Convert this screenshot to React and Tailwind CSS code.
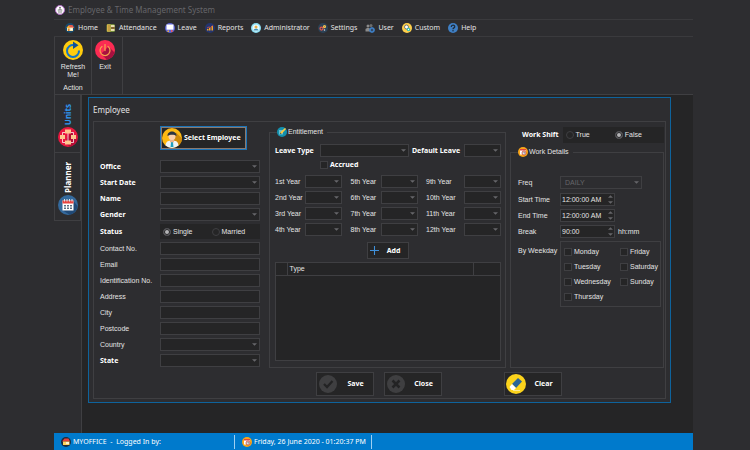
import { useState } from "react";

const HomeIcon = ({ className }) => (
  <svg viewBox="0 0 20 20" className={className}>
    <circle cx="10" cy="10" r="10" fill="#17496b" />
    <path d="M3 10 8 4h7l3 5v1H3z" fill="#e2574c" />
    <path d="M4 9h12v7H4z" fill="#f6e3b0" />
    <path d="M3 10 7 5l4 5z" fill="#f5b52e" />
    <path d="M6 11h3v5H6z" fill="#d9822b" />
    <path d="M11 11h4v3h-4z" fill="#fff" />
  </svg>
);

const OfficeIcon = ({ className }) => (
  <svg viewBox="0 0 20 20" className={className}>
    <circle cx="10" cy="10" r="10" fill="#1b2c3c" />
    <path d="M2 9 7 3h8l3 6z" fill="#e8403a" />
    <path d="M4 9h13v7H4z" fill="#ffd35c" />
    <path d="M10 10h6v4h-6z" fill="#fff4cf" />
  </svg>
);

const AttendanceIcon = ({ className }) => (
  <svg viewBox="0 0 20 20" className={className}>
    <rect x="1" y="2" width="17" height="16" rx="3" fill="#6f8a3a" />
    <path d="M2 3h7v14H2z" fill="#f0c552" />
    <path d="M10 4h7v4h-7zM10 12h7v4h-7z" fill="#e9dfae" />
    <path d="M3 6h5M3 10h5M3 14h5" stroke="#7a5a28" strokeWidth="1.5" />
    <path d="M11 10h6" stroke="#a33b2c" strokeWidth="2" />
  </svg>
);

const LeaveIcon = ({ className }) => (
  <svg viewBox="0 0 20 20" className={className}>
    <circle cx="10" cy="10" r="10" fill="#5b62d6" />
    <path d="M3 3h14v9H3z" fill="#fff" />
    <path d="M3 12h14v2H3z" fill="#c9cdf5" />
    <path d="M5 15h3v3H5z" fill="#f2b134" />
    <path d="M12 14h3v4h-3z" fill="#e85d5d" />
  </svg>
);

const ReportsIcon = ({ className }) => (
  <svg viewBox="0 0 20 20" className={className}>
    <circle cx="10" cy="10" r="10" fill="#24356e" />
    <path d="M4 12h3v3H4zM8 10h3v5H8zM13 6h3v9h-3z" fill="#f5a623" />
    <path d="m4 10 4-2 3 1 5-4" stroke="#e2574c" strokeWidth="1.5" fill="none" />
  </svg>
);

const AdminIcon = ({ className }) => (
  <svg viewBox="0 0 20 20" className={className}>
    <circle cx="10" cy="10" r="10" fill="#8be0f4" />
    <circle cx="10" cy="10" r="7" fill="#eafaff" />
    <circle cx="10" cy="8" r="3" fill="#e8b04a" />
    <path d="M5 15c0-5 10-5 10 0z" fill="#3a8fb5" />
  </svg>
);

const SettingsIcon = ({ className }) => (
  <svg viewBox="0 0 20 20" className={className}>
    <circle cx="10" cy="10" r="10" fill="#2c4257" />
    <circle cx="7" cy="11" r="3" fill="none" stroke="#e2574c" strokeWidth="2.5" />
    <circle cx="13" cy="7" r="2" fill="none" stroke="#f5c04e" strokeWidth="2.5" />
    <circle cx="13" cy="14" r="1.5" fill="#dfe6ea" />
  </svg>
);

const UserIcon = ({ className }) => (
  <svg viewBox="0 0 20 20" className={className}>
    <circle cx="6" cy="6" r="3" fill="#8a8a8a" />
    <circle cx="12" cy="5" r="3" fill="#6d6d6d" />
    <path d="M1 17V13c0-4 10-4 10 0v4z" fill="#8a8a8a" />
    <circle cx="14" cy="14" r="4" fill="none" stroke="#3f7fc4" strokeWidth="3" />
    <path d="M14 8v12M8 14h12" stroke="#3f7fc4" strokeWidth="1.5" />
    <circle cx="14" cy="14" r="1.5" fill="#2d2d30" />
  </svg>
);

const CustomIcon = ({ className }) => (
  <svg viewBox="0 0 20 20" className={className}>
    <circle cx="10" cy="10" r="10" fill="#ffcf4a" />
    <circle cx="9" cy="8" r="4" fill="#fff" stroke="#4b5a66" strokeWidth="1.5" />
    <circle cx="13" cy="13" r="3.5" fill="#2fc0b4" />
    <circle cx="13" cy="13" r="1.3" fill="#fff" />
  </svg>
);

const HelpIcon = ({ className }) => (
  <svg viewBox="0 0 20 20" className={className}>
    <circle cx="10" cy="10" r="10" fill="#3f7fc4" />
    <path
      d="M6.5 8c0-5 7-5 7-.5 0 2.500-3.500 2-3.500 5"
      fill="none"
      stroke="#1d2b3a"
      strokeWidth="2.5"
    />
    <circle cx="10" cy="15.500" r="1.5" fill="#1d2b3a" />
  </svg>
);

const AppIcon = ({ className }) => (
  <svg viewBox="0 0 20 20" className={className}>
    <circle cx="10" cy="10" r="9" fill="#fff" stroke="#b06ac4" strokeWidth="2" />
    <circle cx="10" cy="5" r="1.500" fill="#444" />
    <path d="M8 17V8h4v9" fill="none" stroke="#555" strokeWidth="1.5" />
    <path d="M6 9v4M14 9v4" stroke="#999" strokeWidth="1" />
  </svg>
);

const RefreshIcon = ({ className }) => (
  <svg viewBox="0 0 40 40" className={className}>
    <circle cx="20" cy="20" r="20" fill="#ffcc0d" />
    <path
      d="M32 21A12 12 0 1 1 22 10"
      fill="none"
      stroke="#1273c4"
      strokeWidth="4"
    />
    <path d="M20 3 31 10.500 20 18z" fill="#0f4f96" />
  </svg>
);

const ExitIcon = ({ className }) => (
  <svg viewBox="0 0 40 40" className={className}>
    <circle cx="20" cy="20" r="20" fill="#fb2b53" />
    <path d="M27 13 39 25a20 20 0 0 1-15 14.500L12 28z" fill="#a8103f" />
    <path
      d="M14 13a10 10 0 1 0 12 0"
      fill="none"
      stroke="#f6a04d"
      strokeWidth="2.500"
      strokeLinecap="round"
    />
    <path d="M20 9v12" stroke="#f6a04d" strokeWidth="2.500" strokeLinecap="round" />
  </svg>
);

const UnitsIcon = ({ className }) => (
  <svg viewBox="0 0 40 40" className={className}>
    <circle cx="20" cy="20" r="20" fill="#e8173f" />
    <path d="M26 8 38 26a20 20 0 0 1-14 13.500L14 32z" fill="#b80d35" />
    <path d="M9 18v-7h22v7M20 12v18M9 24v7h22v-7" fill="none" stroke="#fff" strokeWidth="1.5" />
    <path d="M14 5h12v8H14zM4 16h10v8H4zM26 16h10v8H26zM14 27h12v8H14z" fill="#ffc78f" />
  </svg>
);

const PlannerIcon = ({ className }) => (
  <svg viewBox="0 0 40 40" className={className}>
    <circle cx="20" cy="20" r="20" fill="#34699c" />
    <path d="M31 12 39 22a20 20 0 0 1-16 17.500L10 31z" fill="#204a78" />
    <path d="M9 11h22v20H9z" fill="#fff" />
    <path d="M9 11h22v6H9z" fill="#e8443f" />
    <path d="M13 8v5M18 8v5M23 8v5M28 8v5" stroke="#dfe6ea" strokeWidth="2" />
    <path
      d="M12 20h4v3h-4zM18 20h4v3h-4zM24 20h4v3h-4zM12 25h4v3h-4zM18 25h4v3h-4zM24 25h4v3h-4z"
      fill="#5c6f82"
    />
  </svg>
);

const PersonIcon = ({ className }) => (
  <svg viewBox="0 0 40 40" className={className}>
    <circle cx="20" cy="20" r="20" fill="#fdb913" />
    <path d="M28 9 40 21a20 20 0 0 1-9 15.500L20 24z" fill="#d08a0a" />
    <path d="M7 35c1-9 6-10 13-10s12 1 13 10a20 20 0 0 1-26 0z" fill="#eef4f7" />
    <path d="M16 22h8v6l-4 3-4-3z" fill="#e9b58e" />
    <path d="m18 29 2-1 2 1 1 9h-6z" fill="#1d9fc0" />
    <circle cx="20" cy="17" r="7" fill="#fad0ac" />
    <path d="M11 16C10 4 30 4 29 16c-4-3-12-4-18 0z" fill="#2b3440" />
  </svg>
);

const PencilIcon = ({ className }) => (
  <svg viewBox="0 0 20 20" className={className}>
    <circle cx="10" cy="10" r="10" fill="#1490ad" />
    <path d="M4 6h8v9H4z" fill="#6cc0d2" />
    <path d="m6 14 1-4 9-8 2 2-8 9z" fill="#ffc93c" />
    <path d="m6 14 1-3 2 2z" fill="#333" />
  </svg>
);

const ClockIcon = ({ className }) => (
  <svg viewBox="0 0 20 20" className={className}>
    <circle cx="10" cy="10" r="10" fill="#f9a51a" />
    <path d="M4 4h12v11H4z" fill="#fff" />
    <path d="M4 4h12v3H4z" fill="#e2453c" />
    <circle cx="12" cy="12" r="4" fill="#dfe6ea" stroke="#c0392b" strokeWidth="1.5" />
    <path d="M12 10v2h2" stroke="#444" strokeWidth="1" fill="none" />
  </svg>
);

const CheckCircleIcon = ({ className }) => (
  <svg viewBox="0 0 36 36" className={className}>
    <circle cx="18" cy="18" r="18" fill="#3f3f41" />
    <path d="m10 18 6 6 11-12" fill="none" stroke="#232324" strokeWidth="4.500" />
  </svg>
);

const CrossCircleIcon = ({ className }) => (
  <svg viewBox="0 0 36 36" className={className}>
    <circle cx="18" cy="18" r="18" fill="#3f3f41" />
    <path d="m11 11 14 14M25 11 11 25" stroke="#232324" strokeWidth="5" />
  </svg>
);

const EraserIcon = ({ className }) => (
  <svg viewBox="0 0 40 40" className={className}>
    <circle cx="20" cy="20" r="20" fill="#fbd31c" />
    <path d="M24 8 32 15 20 28 12 20z" fill="#2a6496" />
    <path d="m12 20 8 8-4 4h-5l-4-6z" fill="#fff" />
    <path d="M14 33h14" stroke="#fff3b8" strokeWidth="1.500" />
  </svg>
);

const menuItems = [
  { label: "Home", icon: HomeIcon },
  { label: "Attendance", icon: AttendanceIcon },
  { label: "Leave", icon: LeaveIcon },
  { label: "Reports", icon: ReportsIcon },
  { label: "Administrator", icon: AdminIcon },
  { label: "Settings", icon: SettingsIcon },
  { label: "User", icon: UserIcon },
  { label: "Custom", icon: CustomIcon },
  { label: "Help", icon: HelpIcon },
];

const personFields = [
  { label: "Office", name: "office", type: "select", bold: true },
  { label: "Start Date", name: "startDate", type: "select", bold: true },
  { label: "Name", name: "name", bold: true },
  { label: "Gender", name: "gender", type: "select", bold: true },
  { label: "Status", name: "status", type: "radio", bold: true },
  { label: "Contact No.", name: "contact" },
  { label: "Email", name: "email" },
  { label: "Identification No.", name: "identification" },
  { label: "Address", name: "address" },
  { label: "City", name: "city" },
  { label: "Postcode", name: "postcode" },
  { label: "Country", name: "country", type: "select" },
  { label: "State", name: "state", type: "select", bold: true },
];

const yearColumns = [
  ["1st Year", "2nd Year", "3rd Year", "4th Year"],
  ["5th Year", "6th Year", "7th Year", "8th Year"],
  ["9th Year", "10th Year", "11th Year", "12th Year"],
];

const weekdays = [
  ["Monday", "Tuesday", "Wednesday", "Thursday"],
  ["Friday", "Saturday", "Sunday"],
];

const boldText = "font-['Noto_Sans',sans-serif] font-bold text-white";
const fieldBox = "h-[13px] w-full border border-[#3f3f42] px-1";

const Select = ({ id, value = "", disabled }) => (
  <div className="relative w-full">
    <select
      id={id}
      disabled={disabled}
      defaultValue={value}
      className={`${fieldBox} block appearance-none leading-[11px] ${
        disabled ? "bg-[#2d2d30] text-[#66666a] opacity-100" : "bg-[#252526]"
      }`}
    >
      <option value={value}>{value}</option>
    </select>
    <svg
      viewBox="0 0 4 2"
      className="pointer-events-none absolute top-[5px] right-[3px] h-[3px] w-[5px]"
    >
      <path d="M0 0h4L2 2z" fill="#66666a" />
    </svg>
  </div>
);

const Spinner = ({ id, value }) => (
  <div className="flex h-[13px] w-[55px] border border-[#3f3f42] bg-[#252526]">
    <input id={id} defaultValue={value} className="w-0 flex-1 pl-px leading-[11px] outline-none" />
    <div className="flex w-2 flex-col items-center justify-between py-px">
      <button type="button" aria-label="Increase">
        <svg viewBox="0 0 4 2" className="block h-[3px] w-[5px]">
          <path d="M0 2h4L2 0z" fill="#66666a" />
        </svg>
      </button>
      <button type="button" aria-label="Decrease">
        <svg viewBox="0 0 4 2" className="block h-[3px] w-[5px]">
          <path d="M0 0h4L2 2z" fill="#66666a" />
        </svg>
      </button>
    </div>
  </div>
);

const RadioPair = ({ name, options, value, onChange, className }) => (
  <div className={`grid grid-cols-2 items-center bg-[#252526] pl-[3px] ${className}`}>
    {options.map((option) => (
      <label key={option} className="flex items-center gap-[2px]">
        <input
          type="radio"
          name={name}
          checked={value === option}
          onChange={() => onChange(option)}
          className="size-2 appearance-none rounded-full border border-[#3f3f42] bg-[#252526] checked:border-[#4a4a4e] checked:bg-[#b4b4b6] checked:shadow-[inset_0_0_0_1px_#252526]"
        />
        {option}
      </label>
    ))}
  </div>
);

const Checkbox = ({ label, className = "" }) => (
  <label className={`flex items-center gap-[2px] ${className}`}>
    <input
      type="checkbox"
      className="size-2 appearance-none border border-[#3f3f42] bg-[#252526] checked:bg-[#007acc]"
    />
    {label}
  </label>
);

const ActionButton = ({ icon: Icon, label, iconClass }) => (
  <button
    type="button"
    className={`flex h-6 w-[58px] items-center border border-[#3f3f42] bg-[#252526] pl-px ${boldText}`}
  >
    <span className="flex w-5 justify-center">
      <Icon className={iconClass} />
    </span>
    <span className="flex-1 text-center">{label}</span>
  </button>
);

const PersonForm = () => {
  const [status, setStatus] = useState("Single");

  return (
    <div className="w-[175px] shrink-0 pt-1 pr-[9px] pb-[31px] pl-[6px]">
      <div className="mb-[10px] pl-[60px]">
        <button
          type="button"
          className={`flex h-6 w-[87px] items-center gap-[2px] border border-[#1b74b8] bg-[#252526] whitespace-nowrap outline outline-offset-[-2px] outline-[#8a7a70] ${boldText}`}
        >
          <PersonIcon className="ml-px size-5 shrink-0" />
          Select Employee
        </button>
      </div>
      <div className="flex flex-col gap-[3px]">
        {personFields.map((field) => (
          <div key={field.name} className="flex items-center">
            {field.type === "radio" ? (
              <>
                <span className={`w-[60px] shrink-0 ${boldText}`}>{field.label}</span>
                <RadioPair
                  name={field.name}
                  options={["Single", "Married"]}
                  value={status}
                  onChange={setStatus}
                  className="h-[15px] flex-1"
                />
              </>
            ) : (
              <>
                <label
                  htmlFor={field.name}
                  className={`w-[60px] shrink-0 whitespace-nowrap ${field.bold ? boldText : ""}`}
                >
                  {field.label}
                </label>
                {field.type === "select" ? (
                  <Select id={field.name} />
                ) : (
                  <input id={field.name} className={`${fieldBox} bg-[#252526]`} />
                )}
              </>
            )}
          </div>
        ))}
      </div>
    </div>
  );
};

const Entitlement = () => (
  <fieldset className="flex min-w-0 flex-1 flex-col border border-[#3f3f42] pr-1 pb-[6px] pl-[5px]">
    <legend className="ml-[2px] flex h-[10px] items-center gap-px pr-1">
      <PencilIcon className="size-[10px]" />
      Entitlement
    </legend>
    <div className="mt-[7px] flex items-center">
      <label htmlFor="leaveType" className={`w-[45px] shrink-0 whitespace-nowrap ${boldText}`}>
        Leave Type
      </label>
      <Select id="leaveType" />
      <label
        htmlFor="defaultLeave"
        className={`w-[55px] shrink-0 pl-[3px] whitespace-nowrap ${boldText}`}
      >
        Default Leave
      </label>
      <div className="w-[37px] shrink-0">
        <Select id="defaultLeave" />
      </div>
    </div>
    <Checkbox label="Accrued" className={`mt-[2px] ml-[45px] h-3 ${boldText}`} />
    <div className="mt-1 flex justify-between">
      {yearColumns.map((column) => (
        <div key={column[0]} className="flex flex-col gap-[3px]">
          {column.map((year) => (
            <div key={year} className="flex items-center">
              <label
                htmlFor={year}
                className={`whitespace-nowrap ${
                  column[0] === "9th Year" ? "w-[38px]" : "w-[30px]"
                }`}
              >
                {year}
              </label>
              <div className="w-[37px]">
                <Select id={year} />
              </div>
            </div>
          ))}
        </div>
      ))}
    </div>
    <button
      type="button"
      className={`mt-[6px] flex h-[17px] w-[42px] items-center self-center border border-[#3f3f42] bg-[#252526] ${boldText}`}
    >
      <svg viewBox="0 0 10 10" className="ml-[2px] size-[9px]">
        <path d="M5 0v10M0 5h10" stroke="#3f8fd8" strokeWidth="1.200" />
      </svg>
      <span className="flex-1 text-center">Add</span>
    </button>
    <div className="mt-[3px] flex-1 border border-[#3f3f42] bg-[#252526]">
      <table className="w-full table-fixed border-collapse">
        <thead>
          <tr className="h-3 border-b border-[#3f3f42]">
            <th className="w-[11px] border-r border-[#3f3f42]"></th>
            <th className="border-r border-[#3f3f42] px-[2px] text-left font-normal">Type</th>
            <th className="w-[27px]"></th>
          </tr>
        </thead>
        <tbody></tbody>
      </table>
    </div>
  </fieldset>
);

const WorkDetails = () => {
  const [shift, setShift] = useState("False");

  return (
    <div className="flex w-[155px] shrink-0 flex-col">
      <div className="flex items-center gap-1 pr-px pl-3">
        <span className={`shrink-0 ${boldText}`}>Work Shift</span>
        <RadioPair
          name="shift"
          options={["True", "False"]}
          value={shift}
          onChange={setShift}
          className="h-4 flex-1"
        />
      </div>
      <fieldset className="mt-1 mr-px min-w-0 flex-1 border border-[#3f3f42] pr-[2px] pl-[7px]">
        <legend className="flex h-[10px] items-center gap-px pr-1">
          <ClockIcon className="size-[10px]" />
          Work Details
        </legend>
        <div className="mt-[19px] flex items-center">
          <label htmlFor="freq" className="w-[42px] shrink-0">
            Freq
          </label>
          <div className="w-[82px]">
            <Select id="freq" value="DAILY" disabled />
          </div>
        </div>
        <div className="mt-1 flex flex-col gap-[3px]">
          <div className="flex items-center">
            <label htmlFor="startTime" className="w-[42px] shrink-0">
              Start Time
            </label>
            <Spinner id="startTime" value="12:00:00 AM" />
          </div>
          <div className="flex items-center">
            <label htmlFor="endTime" className="w-[42px] shrink-0">
              End Time
            </label>
            <Spinner id="endTime" value="12:00:00 AM" />
          </div>
          <div className="flex items-center">
            <label htmlFor="break" className="w-[42px] shrink-0">
              Break
            </label>
            <Spinner id="break" value="90:00" />
            <span className="pl-[3px]">hh:mm</span>
          </div>
        </div>
        <div className="mt-[3px] flex">
          <span className="mt-[5px] w-[42px] shrink-0 whitespace-nowrap">By Weekday</span>
          <div className="grid min-w-0 flex-1 grid-cols-[56px_1fr] border border-[#3f3f42] pt-[5px] pb-1 pl-[3px]">
            {weekdays.map((column) => (
              <div key={column[0]} className="flex min-w-0 flex-col gap-[5px]">
                {column.map((day) => (
                  <Checkbox key={day} label={day} />
                ))}
              </div>
            ))}
          </div>
        </div>
      </fieldset>
    </div>
  );
};

const sideTab =
  "flex flex-col items-center gap-[2px] border border-t-0 border-[#3f3f42] pt-[9px] pb-[5px] font-['Noto_Sans',sans-serif] text-[8px] font-bold leading-[10px]";

const App = () => {
  return (
    <div className="min-h-screen bg-[#2d2d30] pr-[57px] pl-[54px] font-['Liberation_Sans',sans-serif] text-[7px] leading-[10px] text-[#e4e4e4]">
      <div className="flex min-h-screen flex-col">
        <header className="flex h-[19px] items-center gap-[3px] pl-px font-['Noto_Sans',sans-serif] text-[8px] text-[#66666a]">
          <AppIcon className="size-[10px]" />
          <h1>Employee &amp; Time Management System</h1>
        </header>

        <nav className="flex h-[18px] items-center gap-2 border-y border-[#3a3a3d] pl-[11px] font-['Noto_Sans',sans-serif]">
          {menuItems.map((item) => (
            <button key={item.label} type="button" className="flex items-center gap-[3px]">
              <item.icon className="size-[10px]" />
              {item.label}
            </button>
          ))}
        </nav>

        <div className="flex h-[58px] border-b border-l border-[#3f3f42] leading-2">
          <div className="flex w-[37px] flex-col items-center justify-between border-r border-[#3f3f42] pt-[3px] pb-[2px]">
            <button type="button" className="flex flex-col items-center gap-[3px]">
              <RefreshIcon className="size-5" />
              <span>
                Refresh
                <br />
                Me!
              </span>
            </button>
            <span>Action</span>
          </div>
          <div className="flex w-[31px] flex-col items-center border-r border-[#3f3f42] pt-[3px] pr-1">
            <button type="button" className="flex flex-col items-center gap-[3px]">
              <ExitIcon className="size-5" />
              Exit
            </button>
          </div>
        </div>

        <div className="flex flex-1">
          <aside className="flex w-7 shrink-0 flex-col border-r border-[#3f3f42]">
            <button type="button" className={`${sideTab} text-[#2f96f0]`}>
              <span className="rotate-180 [writing-mode:vertical-rl]">Units</span>
              <UnitsIcon className="size-5" />
            </button>
            <button type="button" className={`${sideTab} text-white`}>
              <span className="rotate-180 [writing-mode:vertical-rl]">Planner</span>
              <PlannerIcon className="size-5" />
            </button>
          </aside>

          <main className="flex-1 bg-[#252526] pt-[2px] pr-[22px] pl-[6px]">
            <section className="border border-[#0e639c] bg-[#2d2d30] px-1 pb-[3px]">
              <h2 className="flex h-[23px] items-center font-['Noto_Sans',sans-serif] text-[8px]">
                Employee
              </h2>
              <div className="flex border border-[#3f3f42]">
                <PersonForm />
                <div className="flex flex-1 flex-col pt-[5px] pb-[2px]">
                  <div className="flex flex-1 gap-1">
                    <Entitlement />
                    <WorkDetails />
                  </div>
                  <div className="mt-1 flex gap-[10px] pl-[47px]">
                    <ActionButton icon={CheckCircleIcon} label="Save" iconClass="size-[18px]" />
                    <ActionButton icon={CrossCircleIcon} label="Close" iconClass="size-[18px]" />
                    <div className="pl-[52px]">
                      <ActionButton icon={EraserIcon} label="Clear" iconClass="size-5" />
                    </div>
                  </div>
                </div>
              </div>
            </section>
          </main>
        </div>

        <footer className="flex h-[17px] items-center bg-[#007acc] font-['Noto_Sans',sans-serif] text-white">
          <div className="flex h-[14px] w-[181px] items-center gap-[2px] border-r border-[#9fd0f2] pl-[7px]">
            <OfficeIcon className="size-[10px]" />
            <span>MYOFFICE&nbsp; -&nbsp; Logged In by:</span>
          </div>
          <div className="flex h-[14px] items-center gap-[2px] border-r border-[#9fd0f2] pr-[5px] pl-[7px]">
            <ClockIcon className="size-[10px]" />
            <time>Friday, 26 June 2020 - 01:20:37 PM</time>
          </div>
        </footer>
      </div>
    </div>
  );
};

export default App;
